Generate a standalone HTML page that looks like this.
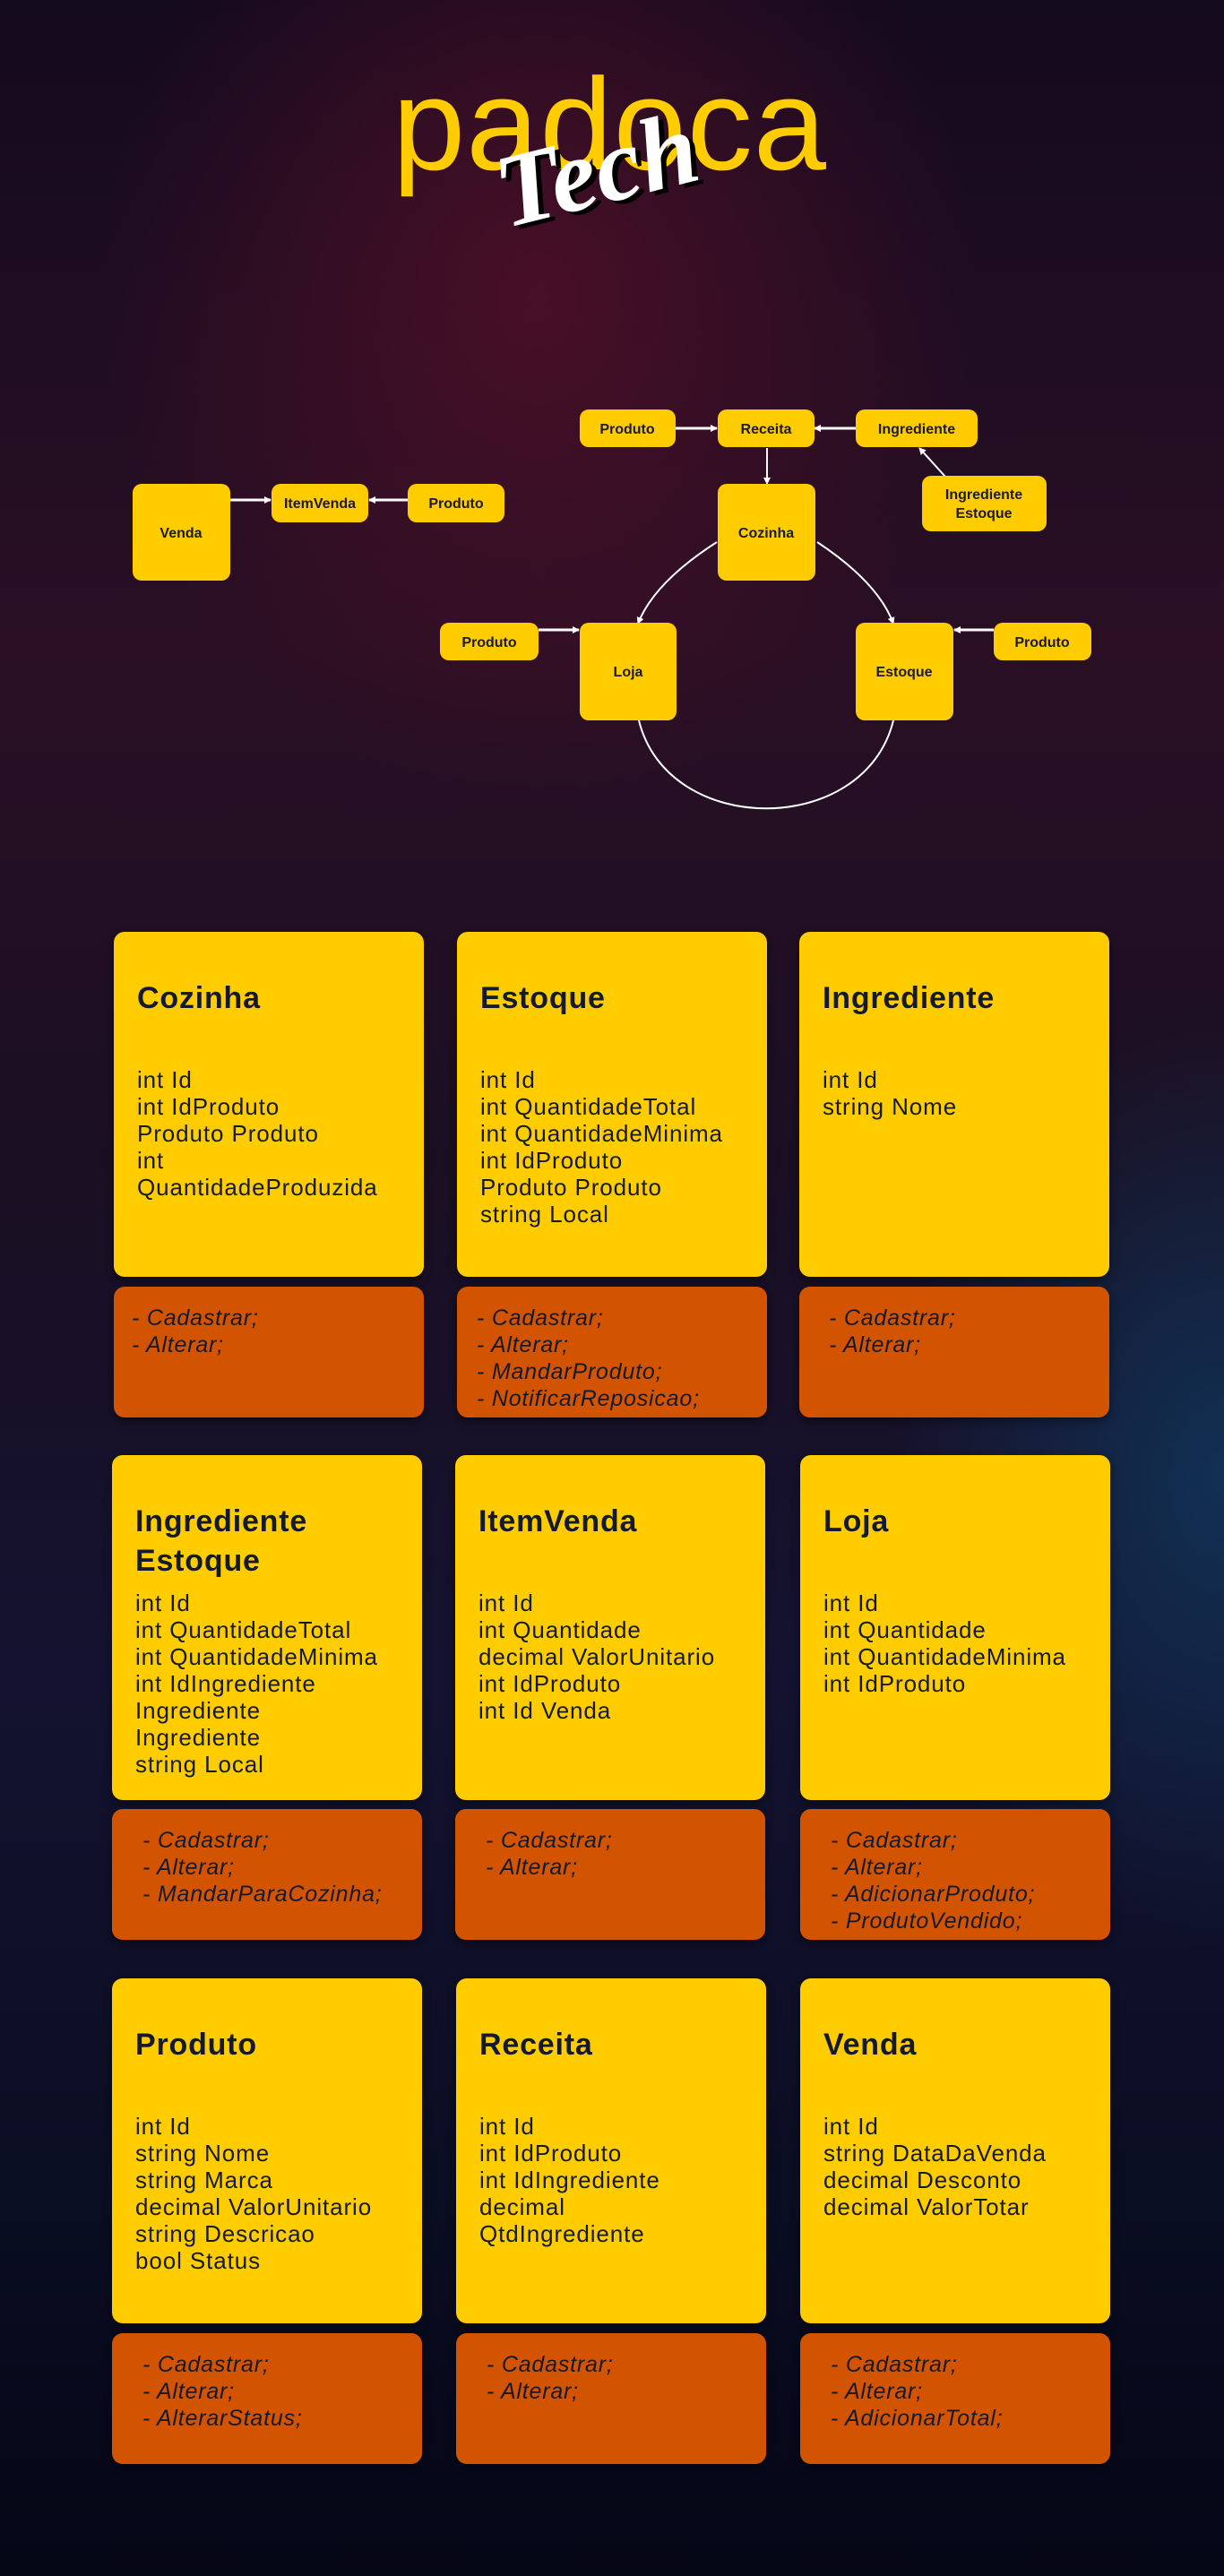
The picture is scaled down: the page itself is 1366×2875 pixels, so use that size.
<!DOCTYPE html>
<html><head><meta charset="utf-8"><style>
*{margin:0;padding:0;box-sizing:border-box}
html,body{width:1366px;height:2875px;overflow:hidden}
body{position:relative;font-family:"Liberation Sans",sans-serif;
background:
radial-gradient(ellipse 700px 800px at 600px 330px,rgba(80,16,40,.85),rgba(80,16,40,0) 70%),
radial-gradient(ellipse 500px 700px at 1366px 1650px,rgba(16,52,88,.9),rgba(16,52,88,0) 75%),
linear-gradient(180deg,#140a1e 0%,#2a0f24 25%,#1a0f22 45%,#141230 65%,#0a0e22 85%,#050616 100%);}
.logo{position:absolute;left:438px;top:66px;font-size:146px;color:#ffcc00;letter-spacing:1px;line-height:1}
.tech{position:absolute;left:552px;top:132px;font-family:"Liberation Serif",serif;font-style:italic;font-weight:bold;font-size:116px;color:#fff;transform:rotate(-14deg);text-shadow:5px 5px 0 #000;line-height:1}
svg.d{position:absolute;left:0;top:0}
.c{position:absolute;width:346px;border-radius:12px;box-shadow:0 4px 10px rgba(0,0,0,.4)}
.y{background:#ffcc00;height:385px;color:#141a2e}
.o{background:#d35400;height:146px;color:#141a2e;font-style:italic;font-size:25px;line-height:30px;padding-top:20px;letter-spacing:.8px}
.t{position:absolute;left:26px;top:52px;font-size:34px;font-weight:bold;line-height:44px;letter-spacing:.8px}
.b{position:absolute;left:26px;top:150px;font-size:26px;line-height:30px;letter-spacing:.9px}
</style></head><body>
<div class="logo">padoca</div>
<div class="tech">Tech</div>
<svg class="d" width="1366" height="950" font-family="Liberation Sans" font-weight="bold" font-size="16" fill="#1a1a2e">
<defs><marker id="a" markerWidth="8" markerHeight="8" refX="7" refY="4" orient="auto" markerUnits="userSpaceOnUse"><path d="M0,0L8,4L0,8z" fill="#fff"/></marker></defs>
<g stroke="#fff" stroke-width="3" fill="none" marker-end="url(#a)">
<line x1="257" y1="558" x2="302" y2="558"/>
<line x1="455" y1="558" x2="412" y2="558"/>
<line x1="754" y1="478" x2="800" y2="478"/>
<line x1="955" y1="478" x2="909" y2="478"/>
<line x1="856" y1="500" x2="856" y2="540" stroke-width="2"/>
<line x1="1055" y1="532" x2="1026" y2="500" stroke-width="2"/>
<line x1="601" y1="703" x2="646" y2="703"/>
<line x1="1109" y1="703" x2="1065" y2="703"/>
<path d="M800,605 Q730,650 712,696" stroke-width="2"/>
<path d="M912,605 Q980,650 997,696" stroke-width="2"/>
<path d="M713,804 C745,935 965,935 997,804" stroke-width="2" marker-end="none"/>
</g>
<g fill="#ffcc00">
<rect x="148" y="540" width="109" height="108" rx="10"/>
<rect x="303" y="540" width="108" height="43" rx="10"/>
<rect x="455" y="540" width="108" height="43" rx="10"/>
<rect x="647" y="457" width="107" height="42" rx="10"/>
<rect x="801" y="457" width="108" height="42" rx="10"/>
<rect x="955" y="457" width="136" height="42" rx="10"/>
<rect x="1029" y="531" width="139" height="62" rx="10"/>
<rect x="801" y="540" width="109" height="108" rx="10"/>
<rect x="491" y="695" width="110" height="42" rx="10"/>
<rect x="647" y="695" width="108" height="109" rx="10"/>
<rect x="955" y="695" width="109" height="109" rx="10"/>
<rect x="1109" y="695" width="109" height="42" rx="10"/>
</g>
<g text-anchor="middle">
<text x="202" y="600">Venda</text>
<text x="357" y="567">ItemVenda</text>
<text x="509" y="567">Produto</text>
<text x="700" y="484">Produto</text>
<text x="855" y="484">Receita</text>
<text x="1023" y="484">Ingrediente</text>
<text x="1098" y="557">Ingrediente</text>
<text x="1098" y="578">Estoque</text>
<text x="855" y="600">Cozinha</text>
<text x="546" y="722">Produto</text>
<text x="701" y="755">Loja</text>
<text x="1009" y="755">Estoque</text>
<text x="1163" y="722">Produto</text>
</g>
</svg>

<div class="c y" style="left:127px;top:1040px"><div class="t">Cozinha</div><div class="b">int Id<br>int IdProduto<br>Produto Produto<br>int<br>QuantidadeProduzida</div></div>
<div class="c o" style="left:127px;top:1436px;padding-left:20px">- Cadastrar;<br>- Alterar;</div>
<div class="c y" style="left:510px;top:1040px"><div class="t">Estoque</div><div class="b">int Id<br>int QuantidadeTotal<br>int QuantidadeMinima<br>int IdProduto<br>Produto Produto<br>string Local</div></div>
<div class="c o" style="left:510px;top:1436px;padding-left:22px">- Cadastrar;<br>- Alterar;<br>- MandarProduto;<br>- NotificarReposicao;</div>
<div class="c y" style="left:892px;top:1040px"><div class="t">Ingrediente</div><div class="b">int Id<br>string Nome</div></div>
<div class="c o" style="left:892px;top:1436px;padding-left:33px">- Cadastrar;<br>- Alterar;</div>

<div class="c y" style="left:125px;top:1624px"><div class="t">Ingrediente<br>Estoque</div><div class="b">int Id<br>int QuantidadeTotal<br>int QuantidadeMinima<br>int IdIngrediente<br>Ingrediente<br>Ingrediente<br>string Local</div></div>
<div class="c o" style="left:125px;top:2019px;padding-left:34px">- Cadastrar;<br>- Alterar;<br>- MandarParaCozinha;</div>
<div class="c y" style="left:508px;top:1624px"><div class="t">ItemVenda</div><div class="b">int Id<br>int Quantidade<br>decimal ValorUnitario<br>int IdProduto<br>int Id Venda</div></div>
<div class="c o" style="left:508px;top:2019px;padding-left:34px">- Cadastrar;<br>- Alterar;</div>
<div class="c y" style="left:893px;top:1624px"><div class="t">Loja</div><div class="b">int Id<br>int Quantidade<br>int QuantidadeMinima<br>int IdProduto</div></div>
<div class="c o" style="left:893px;top:2019px;padding-left:34px">- Cadastrar;<br>- Alterar;<br>- AdicionarProduto;<br>- ProdutoVendido;</div>

<div class="c y" style="left:125px;top:2208px"><div class="t">Produto</div><div class="b">int Id<br>string Nome<br>string Marca<br>decimal ValorUnitario<br>string Descricao<br>bool Status</div></div>
<div class="c o" style="left:125px;top:2604px;padding-left:34px">- Cadastrar;<br>- Alterar;<br>- AlterarStatus;</div>
<div class="c y" style="left:509px;top:2208px"><div class="t">Receita</div><div class="b">int Id<br>int IdProduto<br>int IdIngrediente<br>decimal<br>QtdIngrediente</div></div>
<div class="c o" style="left:509px;top:2604px;padding-left:34px">- Cadastrar;<br>- Alterar;</div>
<div class="c y" style="left:893px;top:2208px"><div class="t">Venda</div><div class="b">int Id<br>string DataDaVenda<br>decimal Desconto<br>decimal ValorTotar</div></div>
<div class="c o" style="left:893px;top:2604px;padding-left:34px">- Cadastrar;<br>- Alterar;<br>- AdicionarTotal;</div>
</body></html>
